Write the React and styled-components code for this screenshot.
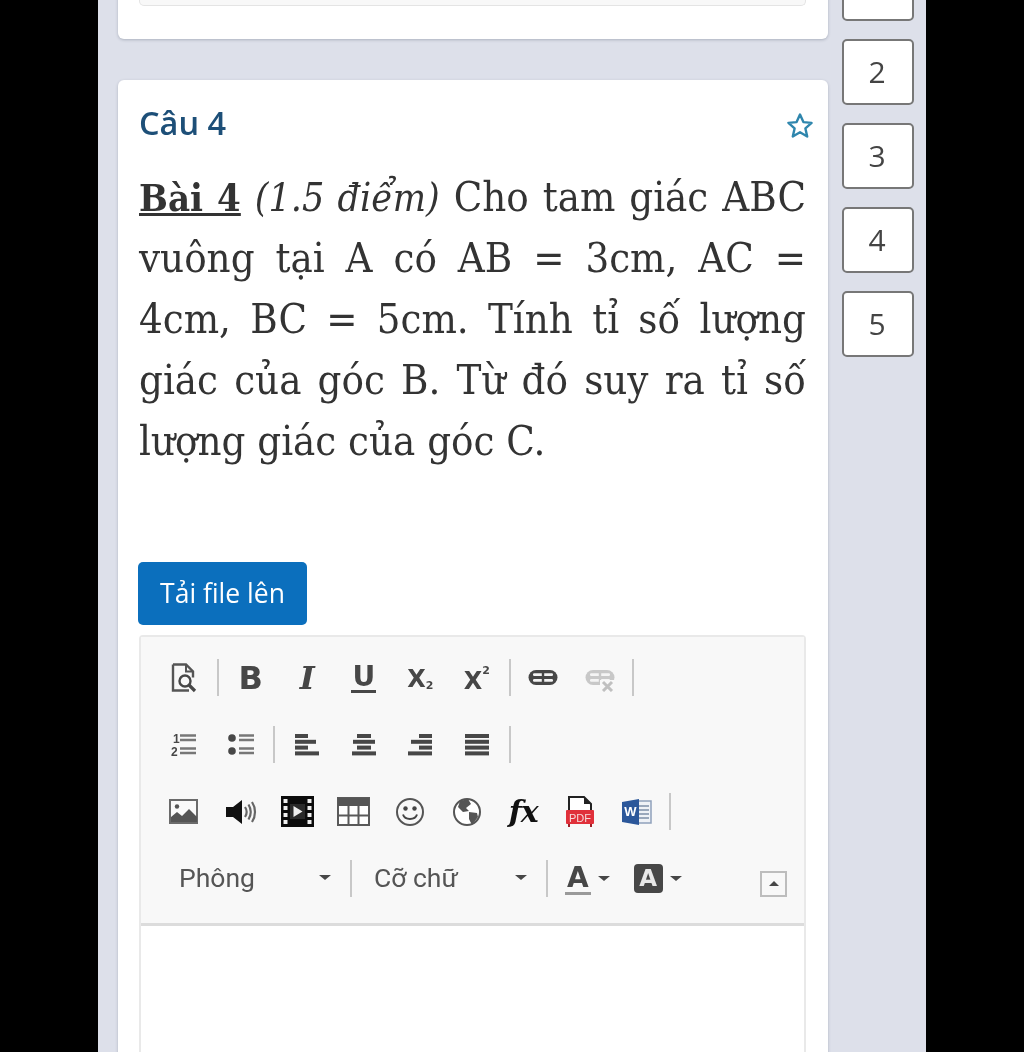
import React from 'react';
import styled, { createGlobalStyle } from 'styled-components';

const GlobalStyle = createGlobalStyle`
    html, body {
        margin: 0;
        padding: 0;
        background: #000;
        height: 100%;
    }
`

const Frame = styled.div`
    margin-left: 98px;
    width: 828px;
    height: 1052px;
    box-sizing: border-box;
    padding: 0 12px 0 20px;
    background: #dde0ea;
    overflow: hidden;
    display: flex;
    gap: 14px;
    align-items: flex-start;
    filter: blur(0.45px);
`

const Main = styled.div`
    width: 710px;
    flex: none;
    margin-top: -60px;
    display: flex;
    flex-direction: column;
    gap: 41px;
`

const Card = styled.div`
    background: #fff;
    border-radius: 6px;
    box-shadow: 0 1px 3px rgba(60, 70, 90, 0.3);
    box-sizing: border-box;
    padding: 0 22px 0 21px;
`

const PrevBox = styled.div`
    height: 66px;
    margin-bottom: 33px;
    background: #f8f8f8;
    border: 1px solid #e4e4e4;
    border-top: 0;
    border-radius: 0 0 5px 5px;
    box-sizing: border-box;
`

const CardHead = styled.div`
    height: 87px;
    display: flex;
    align-items: center;
    justify-content: space-between;
`

const Title = styled.div`
    font-family: "Open Sans", sans-serif;
    font-size: 32.5px;
    font-weight: 600;
    color: #1d4f78;
    margin-top: -2px;
`

const StarWrap = styled.div`
    margin-right: -8px;
    margin-top: 4px;
    display: flex;
`

const Question = styled.p`
    margin: -1px 0 0;
    font-family: "DejaVu Serif Condensed", "DejaVu Serif", serif;
    font-stretch: condensed;
    font-size: 41.5px;
    line-height: 61px;
    color: #333;
    text-align: justify;

    strong {
        font-size: 38px;
        line-height: 1;
        text-decoration: underline;
    }

    em {
        font-size: 39px;
        line-height: 1;
    }
`

const UploadBtn = styled.button`
    display: block;
    margin-top: 91px;
    margin-left: -1px;
    width: 169px;
    height: 63px;
    border: 0;
    border-radius: 5px;
    background: #0b6fbd;
    color: #fff;
    font-family: "Open Sans", sans-serif;
    font-size: 26.5px;
    padding-bottom: 3px;
`

const Editor = styled.div`
    margin-top: 10px;
    height: 520px;
    border: 2px solid #e9e9e9;
    border-radius: 4px 4px 0 0;
    box-sizing: border-box;
`

const Toolbar = styled.div`
    background: #f8f8f8;
    border-bottom: 3px solid #dcdcdc;
    padding: 7px 0 13px 15px;
    height: 289px;
    box-sizing: border-box;
`

const Row = styled.div`
    height: 67px;
    display: flex;
    align-items: center;
`

const IconBtn = styled.div`
    width: 56.5px;
    height: 40px;
    flex: none;
    display: flex;
    align-items: center;
    justify-content: center;
    color: ${p => p.$disabled ? '#c4c4c4' : '#474747'};
`

const Sep = styled.div`
    width: 2px;
    height: 37px;
    flex: none;
    margin: 0 4px;
    background: #c8c8c8;
`

const Glyph = styled.span`
    font-family: "DejaVu Sans", sans-serif;
    font-size: 32px;
    font-weight: 700;
    line-height: 1;
    color: inherit;
`

const SerifGlyph = styled(Glyph)`
    font-family: "DejaVu Serif", serif;
    font-style: italic;
    font-size: ${p => p.$size || 32}px;
    color: ${p => p.$color || 'inherit'};
    letter-spacing: ${p => p.$tight ? '-1px' : '0'};
`

const Under = styled(Glyph)`
    font-size: 28px;
    border-bottom: 3px solid #474747;
    line-height: 27px;
    padding: 0 1px;
`

const Script = styled.span`
    display: flex;
    align-items: ${p => p.$up ? 'flex-start' : 'flex-end'};
    gap: 0;
    height: 26px;
    font-family: "DejaVu Sans", sans-serif;
    font-weight: 700;
    color: #474747;
`

const ScriptX = styled.span`
    font-size: 24px;
    line-height: 24px;
    margin-top: ${p => p.$up ? 4 : 0}px;
`

const ScriptNum = styled.span`
    font-size: 11px;
    line-height: 11px;
`

const Combo = styled.div`
    width: ${p => p.$w}px;
    height: 40px;
    flex: none;
    box-sizing: border-box;
    padding: 0 15px 2px ${p => p.$pad}px;
    display: flex;
    align-items: center;
    justify-content: space-between;
    font-family: Roboto, sans-serif;
    font-size: 26.5px;
    color: #555;
`

const Arrow = styled.i`
    width: 0;
    height: 0;
    border-left: 6px solid transparent;
    border-right: 6px solid transparent;
    border-top: 5px solid #474747;
`

const ColorBtn = styled.div`
    height: 40px;
    flex: none;
    display: flex;
    align-items: center;
    gap: 7px;
    margin-left: ${p => p.$ml}px;
`

const ColorA = styled(Glyph)`
    font-size: 28px;
    color: #474747;
    line-height: 29px;
    border-bottom: 3px solid #9a9a9a;
    padding: 0 2px;
`

const BackA = styled(Glyph)`
    width: 29px;
    height: 29px;
    border-radius: 4px;
    background: #474747;
    color: #e8e8e8;
    font-size: 23px;
    line-height: 29px;
    text-align: center;
`

const Collapse = styled.div`
    width: 27px;
    height: 26px;
    margin-left: auto;
    margin-right: 17px;
    margin-top: 10px;
    flex: none;
    box-sizing: border-box;
    border: 2px solid #bdbdbd;
    display: flex;
    align-items: center;
    justify-content: center;
`

const UpArrow = styled.i`
    width: 0;
    height: 0;
    border-left: 5px solid transparent;
    border-right: 5px solid transparent;
    border-bottom: 5px solid #474747;
`

const Nav = styled.div`
    width: 72px;
    flex: none;
    margin-top: -45px;
    display: flex;
    flex-direction: column;
    gap: 18px;
`

const NavBtn = styled.div`
    height: 66px;
    box-sizing: border-box;
    border: 2px solid #777;
    border-radius: 5px;
    background: #fff;
    display: flex;
    align-items: center;
    justify-content: center;
    padding: 0 2px 2px 0;
    font-family: "Open Sans", sans-serif;
    font-size: 30px;
    color: #444;
`

const Ico = ({ w = 30, h = 30, children }) => (
    <svg width={w} height={h} viewBox={`0 0 ${w} ${h}`} fill="none">{children}</svg>
)

const AlignIcon = ({ lines }) => (
    <Ico w={26} h={24}>
        {lines.map((l, i) => <rect key={i} x={l[0]} y={1 + i * 5.8} width={l[1]} height={4} fill="#474747" />)}
    </Ico>
)

const Preview = () => (
    <Ico>
        <path d="M4 1.5h13l7 7v6M4 1.5v26h16" stroke="#555" strokeWidth="2.4" />
        <path d="M17 1.5v7h7" stroke="#555" strokeWidth="2" />
        <circle cx="16" cy="18" r="5.5" stroke="#474747" strokeWidth="2.4" />
        <path d="M20 22l6 6" stroke="#474747" strokeWidth="3.2" />
    </Ico>
)

const Ordered = () => (
    <Ico w={28} h={26}>
        <text x="3" y="11" fontFamily="Liberation Sans" fontSize="12" fontWeight="700" fill="#474747">1</text>
        <text x="1" y="24" fontFamily="Liberation Sans" fontSize="12" fontWeight="700" fill="#474747">2</text>
        <path d="M10 3.5h16M10 8h16M10 16.5h16M10 21h16" stroke="#777" strokeWidth="2.6" />
    </Ico>
)

const Bullets = () => (
    <Ico w={28} h={26}>
        <circle cx="5" cy="6" r="3.8" fill="#474747" />
        <circle cx="5" cy="19" r="3.8" fill="#474747" />
        <path d="M12 3.5h15M12 8h15M12 16.5h15M12 21h15" stroke="#777" strokeWidth="2.6" />
    </Ico>
)

const LinkIcon = ({ off }) => (
    <Ico w={30} h={28}>
        <rect x="0.5" y="6" width="29" height="15" rx="7.5" fill={off ? '#c8c8c8' : '#474747'} />
        <rect x="5" y="9.2" width="20" height="2.8" rx="1.2" fill="#f4f4f4" />
        <rect x="5" y="15" width="20" height="2.8" rx="1.2" fill="#f4f4f4" />
        <rect x="13.8" y="9" width="2.4" height="9" fill={off ? '#c8c8c8' : '#474747'} />
        {off && <rect x="15" y="16" width="15" height="12" fill="#f8f8f8" />}
        {off && <path d="M18 18l9 9M27 18l-9 9" stroke="#c0c0c0" strokeWidth="3" />}
    </Ico>
)

const ImageIcon = () => (
    <Ico w={30} h={26}>
        <rect x="1" y="1" width="27" height="23" fill="#fafafa" stroke="#6b6b6b" strokeWidth="2" />
        <circle cx="8" cy="7.5" r="2.2" fill="#555" />
        <path d="M2 23v-5l6-5 5 4 7-7 8 8v5z" fill="#555" />
    </Ico>
)

const AudioIcon = () => (
    <Ico w={32} h={26}>
        <path d="M1 8h7l9-7v24l-9-7H1z" fill="#111" />
        <path d="M20 8c2 3 2 7 0 10M23.5 5.5c3 5 3 10 0 15M27 3c4 6 4 14 0 20" stroke="#666" strokeWidth="2.2" />
    </Ico>
)

const VideoIcon = () => (
    <Ico w={33} h={31}>
        <rect width="33" height="31" fill="#0c0c0c" />
        {[3, 10, 17, 24].map(y => <rect key={y} x="2.5" y={y} width="4" height="4" fill="#f0f0f0" />)}
        {[3, 10, 17, 24].map(y => <rect key={y} x="26.5" y={y} width="4" height="4" fill="#f0f0f0" />)}
        <rect x="9" y="8" width="15" height="15" fill="#2a2a2a" />
        <path d="M12.5 10l9 5.5-9 5.5z" fill="#eee" />
    </Ico>
)

const TableIcon = () => (
    <Ico w={33} h={29}>
        <rect x="1" y="1" width="31" height="27" fill="#fff" stroke="#5a5a5a" strokeWidth="2" />
        <rect x="1" y="1" width="31" height="8" fill="#555" />
        <path d="M11.5 9v19M21.5 9v19M1 18.5h31" stroke="#5a5a5a" strokeWidth="2" />
    </Ico>
)

const Smiley = () => (
    <Ico>
        <circle cx="15" cy="15" r="13" stroke="#555" strokeWidth="2" />
        <circle cx="10.5" cy="11.5" r="2.2" fill="#444" />
        <circle cx="19.5" cy="11.5" r="2.2" fill="#444" />
        <path d="M8 17.5c2 6 12 6 14 0" stroke="#444" strokeWidth="2" />
    </Ico>
)

const Globe = () => (
    <Ico>
        <circle cx="15" cy="15" r="13" fill="#fff" stroke="#555" strokeWidth="2" />
        <path d="M8 4l8-2 3 5-5 4 3 3-6 1-5-5zM17 15l8 1 1 4-6 8-3-6z" fill="#555" />
    </Ico>
)

const PdfIcon = () => (
    <Ico w={30} h={33}>
        <path d="M4 22V2h15l7 7v13" fill="#fff" stroke="#222" strokeWidth="2" />
        <path d="M19 2v7h7z" fill="#222" />
        <rect x="1" y="15" width="28" height="14" rx="1" fill="#e0303a" />
        <rect x="3" y="29" width="2" height="3" fill="#a02028" />
        <rect x="25" y="29" width="2" height="3" fill="#a02028" />
        <text x="15" y="26.5" textAnchor="middle" fontFamily="Liberation Sans" fontSize="11" fill="#f6d9d9">PDF</text>
    </Ico>
)

const WordIcon = () => (
    <Ico w={31} h={28}>
        <rect x="15" y="3" width="15" height="22" fill="#eef1f6" stroke="#8fa0bb" strokeWidth="1.5" />
        <path d="M18 8h10M18 12h10M18 16h10M18 20h10" stroke="#7d8ea8" strokeWidth="1.5" />
        <path d="M1 4l17-3v26L1 24z" fill="#2b579a" />
        <text x="9.5" y="18" textAnchor="middle" fontFamily="Liberation Sans" fontSize="13" fontWeight="700" fill="#fff">W</text>
    </Ico>
)

const Star = () => (
    <svg width="28" height="27" viewBox="0 0 28 27" fill="none">
        <path d="M14 2.5l3.4 7.6 8.2.8-6.2 5.5 1.8 8.1L14 20.3l-7.2 4.2 1.8-8.1-6.2-5.5 8.2-.8z" stroke="#2f86ad" strokeWidth="2.4" strokeLinejoin="round" />
    </svg>
)

export default function App() {
    return (
        <>
            <GlobalStyle />
            <Frame>
                <Main>
                    <Card>
                        <PrevBox />
                    </Card>
                    <Card>
                        <CardHead>
                            <Title>Câu 4</Title>
                            <StarWrap><Star /></StarWrap>
                        </CardHead>
                        <Question>
                            <strong>Bài 4</strong> <em>(1.5 điểm)</em> Cho tam giác ABC vuông tại A có AB = 3cm, AC = 4cm, BC = 5cm. Tính tỉ số lượng giác của góc B. Từ đó suy ra tỉ số lượng giác của góc C.
                        </Question>
                        <UploadBtn>Tải file lên</UploadBtn>
                        <Editor>
                            <Toolbar>
                                <Row>
                                    <IconBtn><Preview /></IconBtn>
                                    <Sep />
                                    <IconBtn><Glyph>B</Glyph></IconBtn>
                                    <IconBtn><SerifGlyph>I</SerifGlyph></IconBtn>
                                    <IconBtn><Under>U</Under></IconBtn>
                                    <IconBtn><Script><ScriptX>X</ScriptX><ScriptNum>2</ScriptNum></Script></IconBtn>
                                    <IconBtn><Script $up><ScriptX $up>X</ScriptX><ScriptNum>2</ScriptNum></Script></IconBtn>
                                    <Sep />
                                    <IconBtn><LinkIcon /></IconBtn>
                                    <IconBtn $disabled><LinkIcon off /></IconBtn>
                                    <Sep />
                                </Row>
                                <Row>
                                    <IconBtn><Ordered /></IconBtn>
                                    <IconBtn><Bullets /></IconBtn>
                                    <Sep />
                                    <IconBtn><AlignIcon lines={[[1, 13], [1, 21], [1, 13], [1, 24]]} /></IconBtn>
                                    <IconBtn><AlignIcon lines={[[6, 14], [2, 22], [6, 14], [1, 24]]} /></IconBtn>
                                    <IconBtn><AlignIcon lines={[[12, 13], [4, 21], [12, 13], [1, 24]]} /></IconBtn>
                                    <IconBtn><AlignIcon lines={[[1, 24], [1, 24], [1, 24], [1, 24]]} /></IconBtn>
                                    <Sep />
                                </Row>
                                <Row>
                                    <IconBtn><ImageIcon /></IconBtn>
                                    <IconBtn><AudioIcon /></IconBtn>
                                    <IconBtn><VideoIcon /></IconBtn>
                                    <IconBtn><TableIcon /></IconBtn>
                                    <IconBtn><Smiley /></IconBtn>
                                    <IconBtn><Globe /></IconBtn>
                                    <IconBtn><SerifGlyph $size={30} $color="#111" $tight>fx</SerifGlyph></IconBtn>
                                    <IconBtn><PdfIcon /></IconBtn>
                                    <IconBtn><WordIcon /></IconBtn>
                                    <Sep />
                                </Row>
                                <Row>
                                    <Combo $w={190} $pad={23}>Phông<Arrow /></Combo>
                                    <Sep />
                                    <Combo $w={186} $pad={18}>Cỡ chữ<Arrow /></Combo>
                                    <Sep />
                                    <ColorBtn $ml={13}><ColorA>A</ColorA><Arrow /></ColorBtn>
                                    <ColorBtn $ml={24}><BackA>A</BackA><Arrow /></ColorBtn>
                                    <Collapse><UpArrow /></Collapse>
                                </Row>
                            </Toolbar>
                        </Editor>
                    </Card>
                </Main>
                <Nav>
                    <NavBtn>1</NavBtn>
                    <NavBtn>2</NavBtn>
                    <NavBtn>3</NavBtn>
                    <NavBtn>4</NavBtn>
                    <NavBtn>5</NavBtn>
                </Nav>
            </Frame>
        </>
    );
}
